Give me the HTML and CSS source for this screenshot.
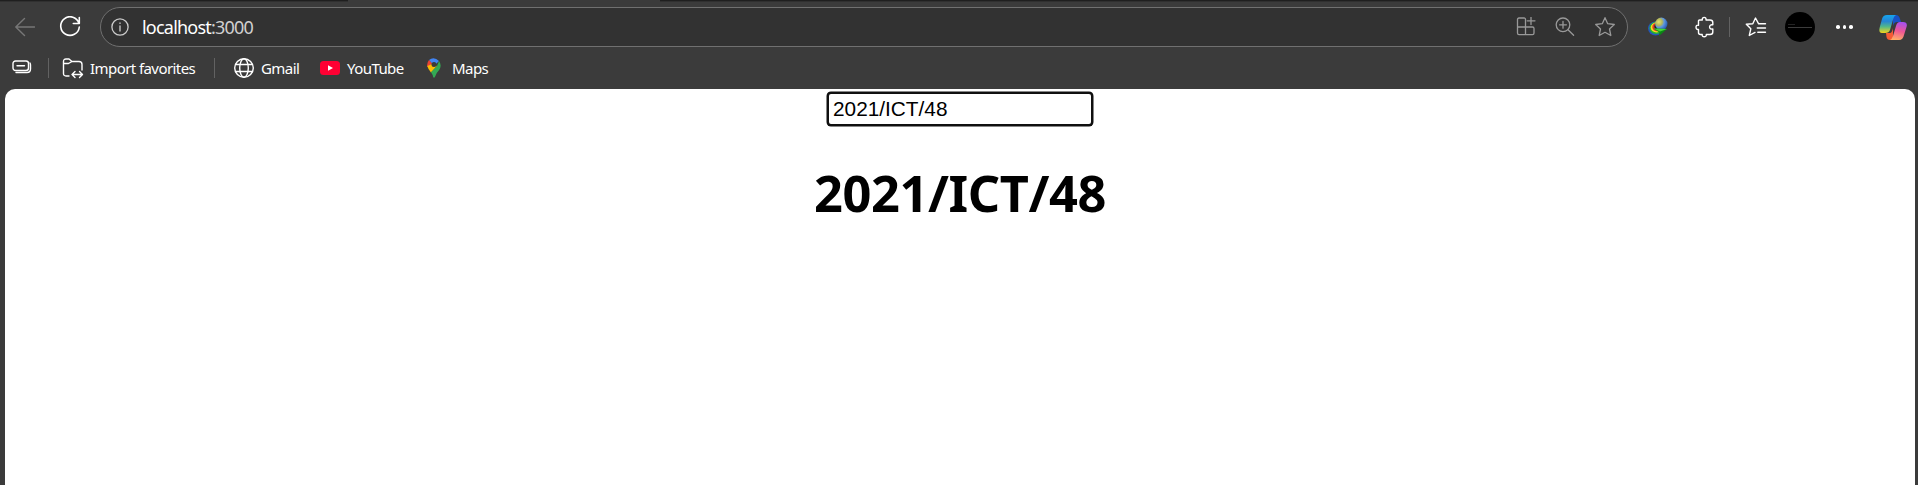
FILE: index.html
```html
<!DOCTYPE html>
<html lang="en">
<head>
<meta charset="utf-8">
<title>localhost:3000</title>
<link rel="stylesheet" href="styles.css">
</head>
<body>
<div class="tabstrip"><span class="tab-edge left"></span><span class="tab-edge right"></span></div>
<header class="toolbar">
  <svg class="icon back" width="20" height="20" viewBox="0 0 20 20"><path d="M19.5 10H.8M9.5 1.5L.8 10l8.700 8.500"/></svg>
  <svg class="icon reload" width="22" height="22" viewBox="0 0 22 22"><path d="M20 7.500A9.300 9.300 0 1 0 20.300 11M20.300 1.500v6h-6"/></svg>
  <div class="address">
    <svg class="icon info" width="18" height="18" viewBox="0 0 18 18"><circle cx="9" cy="9" r="8.100"/><path d="M9 8v5M9 5v.4"/></svg>
    <span class="url">localhost<span class="port">:3000</span></span>
    <div class="actions">
      <svg class="icon" width="20" height="20" viewBox="0 0 20 20"><path d="M9.500 10V2.500Q9.500 1 8 1H3Q1.500 1 1.500 2.500V16Q1.500 17.700 3 17.700H16.500Q18 17.700 18 16V11.500Q18 10 16.500 10H1.500M9.500 10V17.700M15 0v7.500M11.200 3.800H19"/></svg>
      <svg class="icon" width="20" height="20" viewBox="0 0 20 20"><circle cx="8" cy="7.800" r="6.800"/><path d="M13 12.800l5.600 5.500M8 4.400v6.800M4.600 7.800h6.800"/></svg>
      <svg class="icon" width="22" height="22" viewBox="0 0 22 22"><path d="M11 1.700l2.700 6 6.600.8-4.800 4.500 1.300 6.500L11 16.300l-5.800 3.200L6.500 13 1.700 8.500l6.600-.8z"/></svg>
    </div>
  </div>
  <svg class="idm" width="22" height="20" viewBox="0 0 22 20">
    <defs><radialGradient id="globe" cx=".3" cy=".35" r=".8"><stop offset="0" stop-color="#e4e36c"/><stop offset=".35" stop-color="#b0b45e"/><stop offset=".55" stop-color="#5c96e0"/><stop offset="1" stop-color="#1d4da8"/></radialGradient></defs>
    <ellipse cx="8.500" cy="11.500" rx="7.500" ry="7" fill="#2456b8"/>
    <ellipse cx="9" cy="11" rx="6.600" ry="6" fill="#26b52e"/>
    <ellipse cx="9.500" cy="10.500" rx="5.800" ry="5" fill="#f3dc24"/>
    <ellipse cx="10" cy="10" rx="4.700" ry="4.200" fill="#e43b25"/>
    <ellipse cx="11" cy="9.500" rx="3.600" ry="3.200" fill="#222"/>
    <circle cx="14.300" cy="6.800" r="6.200" fill="url(#globe)"/>
    <path d="M6.500 11.500L20 12 12 19 12.500 15.500Z" fill="#0b8615"/><path d="M6.500 11.500L20 12 13 14.500Z" fill="#45d535"/>
  </svg>
  <svg class="icon puzzle" width="20" height="22" viewBox="0 0 20 22"><path d="M4.500 4H7.300C6.700 .5 11.700 .5 11 4H15Q17.800 4 17.800 6.500V8.800C13.500 7.800 13.500 14 17.800 13V16Q17.800 18.500 15 18.500H11.300C12 21.500 6.500 21.500 7.200 18.500H5.500Q3.500 18.500 3.500 16.500V13.500C.2 14.300 .2 8.300 3.500 9.200V5Q3.500 4 4.500 4Z"/></svg>
  <span class="rule top-rule"></span>
  <svg class="icon favorites" width="22" height="20" viewBox="0 0 22 20"><path d="M13.500 6.700L10.500 1 7.800 6.700 1.300 7.300 5.800 11.800 4.300 18.500 10 15.400M13.500 6.700H20.500M12.300 11H20.500M12.800 15.300H20.500"/></svg>
  <div class="avatar"><span></span><span></span></div>
  <div class="more"><i></i><i></i><i></i></div>
  <svg class="copilot" width="28" height="27" viewBox="0 0 28 27">
    <defs>
      <linearGradient id="cool" x1="0" y1="0" x2="0" y2="1"><stop stop-color="#15a5ed"/><stop offset=".35" stop-color="#2684d5"/><stop offset=".65" stop-color="#52b889"/><stop offset="1" stop-color="#f6d51b"/></linearGradient>
      <linearGradient id="warm" x1=".6" y1="0" x2=".4" y2="1"><stop stop-color="#a650ef"/><stop offset=".5" stop-color="#ef5794"/><stop offset="1" stop-color="#ffae67"/></linearGradient>
    </defs>
    <path d="M14 1H17Q20 1 21 5L22 8H18Q15 8 14 12Z" fill="#1851c6"/>
    <path d="M7 19H11Q13 19 14 14V26H11Q8 26 7.500 23Z" fill="#f55b34"/>
    <path d="M8 1H17Q15 2 14.200 5L11 16Q10 19 6 19H3Q-.8 19 .8 13L3 5Q4 1 8 1Z" fill="url(#cool)"/>
    <path d="M20 26H11Q13 25 14 22L17 12Q18 8 21 8H24Q29 8 27.500 13L25 21Q24 26 20 26Z" fill="url(#warm)"/>
  </svg>
</header>
<nav class="bookmarks">
  <svg class="icon groups" width="22" height="16" viewBox="0 0 22 16"><rect x="1" y="1" width="15.500" height="9.500" rx="2.500"/><path d="M5 5.800h7.500M18 3Q18.500 4 18.500 5V9Q18.500 12.500 15 12.500H4"/></svg>
  <span class="rule"></span>
  <svg class="icon folder" width="22" height="21" viewBox="0 0 22 21"><path d="M7 18H4Q1.500 18 1.500 15.500V3.500Q1.500 1 4 1H7L10 3.500H17Q20 3.500 20 6.500V12M1.500 5.500H6.500L10 3.500M10 16.500H20M13 13.500l-3 3 3 3M17.500 13.500l3 3-3 3"/></svg>
  <span class="label import">Import favorites</span>
  <span class="rule second"></span>
  <svg class="icon web" width="22" height="22" viewBox="0 0 22 22"><circle cx="11" cy="11" r="9.300"/><ellipse cx="11" cy="11" rx="4.300" ry="9.300"/><path d="M2.700 7.500H19.300M2.700 14.500H19.300"/></svg>
  <span class="label gmail">Gmail</span>
  <svg class="youtube" width="20" height="14" viewBox="0 0 20 14"><rect width="20" height="14" rx="3.500" fill="#f03"/><path d="M8 4.200L13 7 8 9.800Z" fill="#fff"/></svg>
  <span class="label yt">YouTube</span>
  <svg class="maps" width="14" height="20" viewBox="0 0 14 20">
    <path d="M2 2Q7-2 12 3L7 8Z" fill="#4285f4"/><path d="M2 2Q-.5 5 .3 9L5.500 6Z" fill="#ea4335"/><path d="M.3 8L5 6 10 8 4 14.500Q1 11 .3 8Z" fill="#fbbc04"/><path d="M12 3Q15 7 12.500 11.500Q9 15 7.700 19.500H6.300Q6 17 4 14.300L10 8Z" fill="#34a853"/><circle cx="7" cy="6.500" r="2.500" fill="#3b3b3b"/>
  </svg>
  <span class="label map-label">Maps</span>
</nav>
<main class="page">
  <input class="field" type="text" value="2021/ICT/48" aria-label="Registration number">
  <h1 class="title">2021/ICT/48</h1>
</main>
</body>
</html>
```
FILE: styles.css
```css
* { box-sizing: border-box; }
body {
  margin: 0;
  height: 485px;
  display: flex;
  flex-direction: column;
  overflow: hidden;
  background: #3b3b3b;
  font-family: "Noto Sans", sans-serif;
  color: #fff;
}
svg, .rule, .avatar, .more { flex: none; display: block; }
.icon { fill: none; stroke: #fff; stroke-width: 1.4; stroke-linecap: round; stroke-linejoin: round; }
.tabstrip { height: 7px; flex: none; display: flex; justify-content: space-between; }
.tab-edge { height: 1px; background: #1f1f1f; box-shadow: 0 1px 0 #303030; }
.left { width: 348px; }
.right { width: 1258px; }
.toolbar { height: 40px; flex: none; display: flex; align-items: center; padding-left: 15px; }
.back { stroke: #777; margin-right: 24px; }
.reload { margin-right: 19px; stroke-width: 1.6; }
.address {
  width: 1528px;
  height: 40px;
  display: flex;
  align-items: center;
  flex: none;
  padding: 0 11px 0 10px;
  border: 1px solid #707070;
  border-radius: 20px;
  background: #323232;
}
.info { stroke: #ccc; stroke-width: 1.3; }
.url { margin-left: 13px; padding-bottom: 1px; font-size: 18px; line-height: 24px; letter-spacing: -.78px; white-space: nowrap; }
.port { color: #d0d0d0; }
.actions { margin-left: auto; display: flex; align-items: center; gap: 19px; }
.actions .icon { stroke: #999; stroke-width: 1.3; }
.idm { margin-left: 19px; }
.puzzle { margin-left: 26px; }
.rule { width: 1px; height: 20px; background: #626262; }
.top-rule { margin-left: 14px; }
.favorites { margin-left: 15px; }
.avatar {
  width: 30px;
  height: 30px;
  margin-left: 18px;
  padding: 12px 3px;
  border-radius: 50%;
  background: #000;
}
.avatar span { display: block; width: 7px; height: 1px; margin-bottom: 2px; background: #242424; }
.avatar span + span { width: 24px; background: #3c3c3c; }
.more { display: flex; gap: 3px; margin-left: 21px; }
.more i { width: 3.5px; height: 3.5px; border-radius: 50%; background: #fff; }
.copilot { margin-left: 26px; }
.bookmarks { height: 42px; flex: none; display: flex; align-items: center; padding-left: 12px; }
.groups { margin-right: 14px; }
.folder { margin-left: 13px; }
.label { font-size: 15px; line-height: 20px; letter-spacing: -.57px; white-space: nowrap; }
.import { width: 105px; margin-left: 6px; }
.second { margin-left: 19px; }
.web { margin-left: 18px; }
.gmail { width: 38px; margin-left: 6px; }
.youtube { margin-left: 21px; }
.yt { width: 58px; margin-left: 7px; }
.maps { margin-left: 22px; }
.map-label { margin-left: 11px; }
.page {
  flex: 1;
  display: flex;
  flex-direction: column;
  align-items: center;
  margin: 0 3px 0 5px;
  padding-top: 3px;
  border-radius: 10px 10px 0 0;
  background: #fff;
  color: #000;
}
.field {
  width: 266px;
  height: 34px;
  padding: 0 4px 1px;
  border: 2px solid #101010;
  border-radius: 4px;
  outline: 0;
  box-shadow: 0 0 0 .5px #101010;
  background: #fff;
  color: #000;
  font: 20.8px "Liberation Sans", Arial, sans-serif;
}
.title { margin: 32px 0 0; font-size: 50.5px; line-height: 70px; font-weight: 700; letter-spacing: -.4px; white-space: nowrap; }
```
